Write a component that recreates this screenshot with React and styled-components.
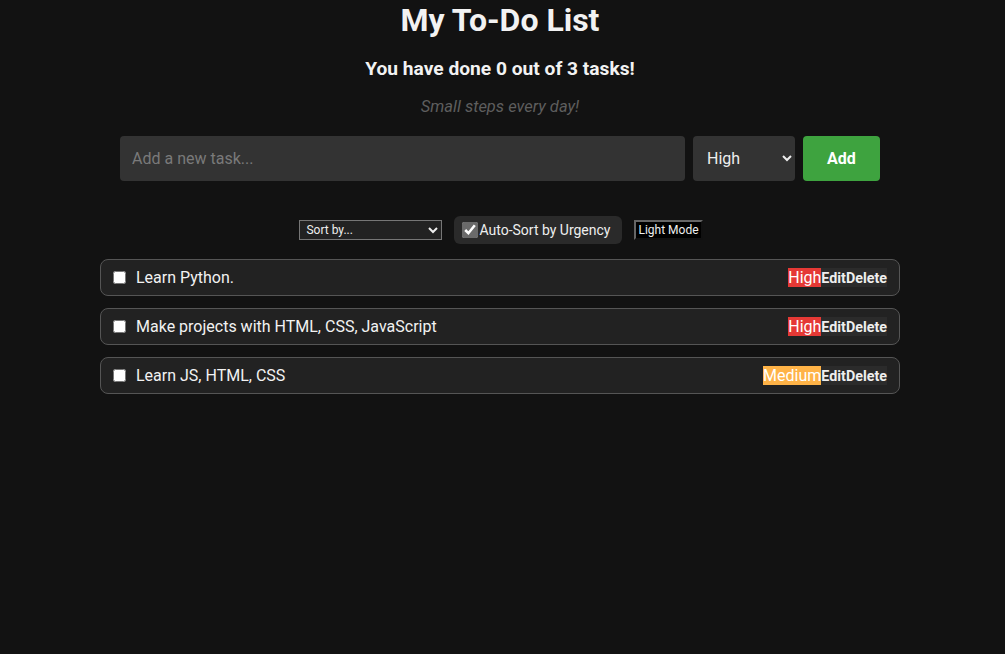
import { useState } from "react";
import styled, { createGlobalStyle } from "styled-components";

const GlobalStyle = createGlobalStyle`
  body {
    margin: 0;
    background: #121212;
    color: #f2f2f2;
    font-family: Roboto, "Liberation Sans", sans-serif;
  }
`;

const Page = styled.div`
  width: 1000px;
  min-height: 654px;
  display: flex;
  flex-direction: column;
  align-items: center;
`;

const Title = styled.h1`
  font-size: 32px;
  font-weight: 700;
  margin: 2px 0 0;
  line-height: 36px;
`;

const Progress = styled.h3`
  font-size: 19.2px;
  font-weight: 700;
  margin: 19px 0 0;
  line-height: 23px;
`;

const Motto = styled.p`
  font-size: 16.5px;
  font-style: italic;
  color: #5e5e5e;
  margin: 17px 0 0;
  line-height: 20px;
`;

const AddRow = styled.div`
  width: 760px;
  display: flex;
  gap: 8px;
  margin-top: 19px;
`;

const TaskInput = styled.input`
  flex: 1;
  height: 45px;
  box-sizing: border-box;
  border: none;
  border-radius: 4px;
  background: #333;
  color: #eee;
  padding: 0 12px;
  font-family: Roboto, sans-serif;
  font-size: 16px;
  &::placeholder {
    color: #7a7a7a;
  }
`;

const PrioritySelect = styled.select`
  width: 102px;
  height: 45px;
  border: none;
  border-radius: 4px;
  background: #333;
  color: #eee;
  padding: 0 10px;
  font-family: Roboto, sans-serif;
  font-size: 16px;
`;

const AddButton = styled.button`
  width: 77px;
  height: 45px;
  border: none;
  border-radius: 4px;
  background: #3ea33f;
  color: #fff;
  font-family: Roboto, sans-serif;
  font-size: 16px;
  font-weight: 700;
`;

const Controls = styled.div`
  display: flex;
  align-items: center;
  gap: 12px;
  margin-top: 35px;
  padding-left: 2px;
`;

const SortSelect = styled.select`
  width: 143px;
  height: 20px;
  background: #222;
  color: #eee;
  border: 1px solid #767676;
  font-family: Roboto, sans-serif;
  font-size: 12px;
  padding: 0 2px;
`;

const AutoSort = styled.label`
  display: flex;
  align-items: center;
  background: #2a2a2a;
  border-radius: 6px;
  height: 28px;
  padding: 0 12px 0 8px;
  font-size: 14px;
  color: #eee;
  input {
    margin: 0 1px 0 0;
    width: 16px;
    height: 16px;
    accent-color: #6a6a6a;
  }
`;

const ModeButton = styled.button`
  height: 20px;
  padding: 0 2px;
  background: #000;
  color: #eee;
  border: 2px outset #666;
  font-family: Roboto, sans-serif;
  font-size: 12px;
`;

const List = styled.ul`
  list-style: none;
  width: 800px;
  padding: 0;
  margin: 15px 0 0;
  display: flex;
  flex-direction: column;
  gap: 12px;
`;

const Item = styled.li`
  height: 37px;
  box-sizing: border-box;
  display: flex;
  align-items: center;
  background: #222;
  border: 1px solid #555;
  border-radius: 8px;
  padding: 0 12px;
  font-size: 16px;
  input {
    margin: 0 10px 0 0;
    width: 13px;
    height: 13px;
  }
`;

const ItemText = styled.span`
  flex: 1;
`;

const Badge = styled.span`
  background: ${(p) => (p.$level === "High" ? "#e53935" : "#ffb347")};
  color: #fff;
  font-size: 16px;
  line-height: 19px;
`;

const SmallButton = styled.button`
  background: #2b2b2b;
  color: #eee;
  border: none;
  padding: 0;
  height: 19px;
  font-family: Roboto, sans-serif;
  font-size: 14.3px;
  font-weight: 700;
`;

const tasks = [
  { text: "Learn Python.", level: "High" },
  { text: "Make projects with HTML, CSS, JavaScript", level: "High" },
  { text: "Learn JS, HTML, CSS", level: "Medium" },
];

export default function App() {
  const [autoSort, setAutoSort] = useState(true);

  return (
    <Page>
      <GlobalStyle />
      <Title>My To-Do List</Title>
      <Progress>You have done 0 out of 3 tasks!</Progress>
      <Motto>Small steps every day!</Motto>
      <AddRow>
        <TaskInput placeholder="Add a new task..." />
        <PrioritySelect defaultValue="High">
          <option>High</option>
          <option>Medium</option>
          <option>Low</option>
        </PrioritySelect>
        <AddButton>Add</AddButton>
      </AddRow>
      <Controls>
        <SortSelect>
          <option>Sort by...</option>
        </SortSelect>
        <AutoSort>
          <input
            type="checkbox"
            checked={autoSort}
            onChange={(e) => setAutoSort(e.target.checked)}
          />
          Auto-Sort by Urgency
        </AutoSort>
        <ModeButton>Light Mode</ModeButton>
      </Controls>
      <List>
        {tasks.map((t) => (
          <Item key={t.text}>
            <input type="checkbox" />
            <ItemText>{t.text}</ItemText>
            <Badge $level={t.level}>{t.level}</Badge>
            <SmallButton>Edit</SmallButton>
            <SmallButton>Delete</SmallButton>
          </Item>
        ))}
      </List>
    </Page>
  );
}
